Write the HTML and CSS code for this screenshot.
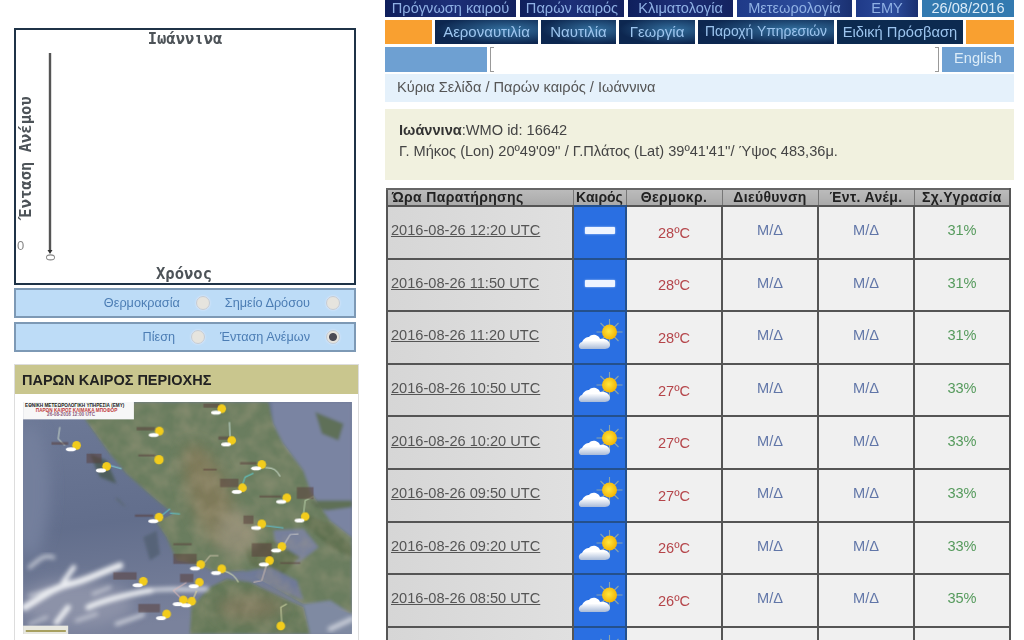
FILE: index.html
```html
<!DOCTYPE html>
<html lang="el">
<head>
  <meta charset="UTF-8">
  <meta name="viewport" content="width=device-width, initial-scale=1.0">
  <title>Παρών καιρός - Ιωάννινα</title>
  <link rel="stylesheet" href="styles.css">
</head>
<body>
  <svg class="defs" width="0" height="0">
    <defs>
      <radialGradient id="sunfill" cx="45%" cy="45%" r="60%">
        <stop offset="0" stop-color="#ffe640"/>
        <stop offset="1" stop-color="#f2b000"/>
      </radialGradient>
      <linearGradient id="cloudfill" x1="0" y1="0" x2="0" y2="1">
        <stop offset=".4" stop-color="#fff"/>
        <stop offset="1" stop-color="#a9bbd8"/>
      </linearGradient>
      <symbol id="sun-cloud" viewBox="0 0 50 40">
        <g stroke="#e6d878" stroke-width="1.1" opacity=".5">
          <path d="M34.500 2V28M21.500 15H47.500M25.500 6L43.500 24M43.500 6L25.500 24"/>
        </g>
        <circle cx="34.500" cy="15" r="7.500" fill="url(#sunfill)"/>
        <path fill="url(#cloudfill)" d="M6 32C3 31 3 26 7 25 9 21 12 20 14 20 17 16 24 18 25 22 30 21 35 24 35 28 35 31 32 32 29 32Z"/>
      </symbol>
      <symbol id="m-sc" viewBox="0 0 50 40">
        <circle cx="34" cy="20" r="13" fill="#f2cc1c"/>
        <ellipse cx="17" cy="32" rx="15" ry="6" fill="#fff"/>
      </symbol>
    </defs>
  </svg>

  <div class="page">
    <aside class="left">
      <div class="chart">
        <svg width="342" height="257" viewBox="0 0 342 257">
          <text class="chart-title" x="171" y="16" text-anchor="middle">Ιωάννινα</text>
          <text class="chart-title" transform="translate(17 129) rotate(-90)" text-anchor="middle">Ένταση Ανέμου</text>
          <path d="M36 25V222" stroke="#555" stroke-width="2.4"/>
          <path d="M33.500 222L36 226 38.500 222" fill="#333"/>
          <text class="chart-tick" x="3" y="222">0</text>
          <text class="chart-tick" transform="translate(41 233) rotate(-90)">0</text>
          <text class="chart-title" x="170" y="251" text-anchor="middle">Χρόνος</text>
        </svg>
      </div>

      <div class="options options-first">
        <label class="option">Θερμοκρασία <input type="radio" name="m"></label>
        <label class="option">Σημείο Δρόσου <input type="radio" name="m"></label>
      </div>
      <div class="options">
        <label class="option">Πίεση <input type="radio" name="m"></label>
        <label class="option">Ένταση Ανέμων <input type="radio" name="m" checked></label>
      </div>

      <section class="region">
        <h3>ΠΑΡΩΝ ΚΑΙΡΟΣ ΠΕΡΙΟΧΗΣ</h3>
        <svg class="map" width="329" height="232" viewBox="40 35 985 695">
          <defs>
            <filter id="soft" x="-5%" y="-5%" width="110%" height="110%"><feGaussianBlur stdDeviation="4"/></filter>
            <filter id="cloudy" x="-5%" y="-5%" width="110%" height="110%"><feGaussianBlur stdDeviation="7"/></filter>
            <filter id="softer" x="-20%" y="-20%" width="140%" height="140%"><feGaussianBlur stdDeviation="20"/></filter>
            <filter id="tiny"><feGaussianBlur stdDeviation="2"/></filter>
            <filter id="terrain" x="0" y="0" width="100%" height="100%">
              <feTurbulence type="fractalNoise" baseFrequency=".02" numOctaves="3" seed="7"/>
              <feColorMatrix values="0 0 0 0 .42  0 0 0 0 .36  0 0 0 0 .24  1.8 0 0 0 -.62"/>
              <feGaussianBlur stdDeviation="3"/>
            </filter>
            <linearGradient id="sea" x1="0" y1="0" x2=".2" y2="1">
              <stop offset="0" stop-color="#6e7a98"/>
              <stop offset=".55" stop-color="#626e8c"/>
              <stop offset="1" stop-color="#7a829c"/>
            </linearGradient>
            <clipPath id="land">
              <path d="M225 85L380 35H775L790 100 820 160 880 240 905 310 960 390 1025 440V670L930 640 880 640 790 590 700 540 620 545 560 520 500 510 470 440 440 395 490 370 430 320 350 250 300 190Z"/>
              <path d="M540 730L545 650 600 590 650 565 720 575 790 610 880 650 900 730Z"/>
            </clipPath>
          </defs>
          <rect x="40" y="35" width="985" height="695" fill="url(#sea)"/>
          <g filter="url(#soft)">
            <path fill="#6a7d5e" d="M225 85L380 35H775L790 100 820 160 880 240 905 310 960 390 1025 440V670L930 640 880 640 790 590 700 540 620 545 560 520 500 510 470 440 440 395 490 370 430 320 350 250 300 190Z"/>
            <path fill="#647858" d="M540 730L545 650 600 590 650 565 720 575 790 610 880 650 900 730Z"/>
            <path fill="#7a84a2" d="M785 35H1025V440L960 390 905 310 880 240 820 160 790 100Z"/>
            <path fill="#5f6f58" d="M915 65L1000 100 985 150 935 130Z"/>
            <path fill="#5f7056" d="M900 330L1025 330 1025 350 950 360 915 350Z"/>
            <path fill="#5d7050" d="M880 370L960 400 1025 470V500L960 470 880 400Z"/>
            <path fill="#77809c" d="M790 420L880 415 925 470 860 520 800 490Z"/>
            <path fill="#5e7050" d="M700 470L790 450 870 500 810 560 720 520Z"/>
            <path fill="#6f7a98" d="M690 545L780 530 860 570 880 630 790 590Z"/>
            <path fill="#7f8aa2" d="M880 640L960 630 1025 670V730H900Z"/>
            <path fill="#566478" d="M400 440L440 420 450 490 420 510Z"/>
            <path fill="#4e5d5c" d="M240 190L290 210 320 280 270 260Z"/>
            <path fill="#56646c" d="M320 320L350 350 340 345 318 325Z"/>
          </g>
          <g filter="url(#softer)">
            <ellipse cx="600" cy="320" rx="60" ry="170" fill="#7f7a5a" transform="rotate(-20 600 320)"/>
            <ellipse cx="680" cy="430" rx="60" ry="70" fill="#908d74"/>
            <ellipse cx="720" cy="650" rx="100" ry="40" fill="#7a785c"/>
            <ellipse cx="200" cy="640" rx="170" ry="70" fill="#8c92a8"/>
            <ellipse cx="60" cy="300" rx="60" ry="200" fill="#737f9c"/>
          </g>
          <rect x="225" y="35" width="800" height="695" filter="url(#terrain)" clip-path="url(#land)" opacity=".4"/>
          <g filter="url(#cloudy)" fill="none" stroke="#eceef2" stroke-linecap="round">
            <path stroke-width="20" d="M45 650C90 625 130 590 180 580S260 550 330 525"/>
            <path stroke-width="14" d="M160 575L192 530"/>
            <path stroke-width="17" d="M235 650C290 625 350 612 420 600"/>
            <path stroke-width="16" d="M140 695L175 650"/>
            <path stroke-width="13" opacity=".6" d="M60 530C90 505 100 492 130 500"/>
            <path stroke-width="13" opacity=".8" d="M420 600C470 590 520 600 590 595"/>
            <path stroke-width="12" opacity=".7" d="M320 700L400 672"/>
            <path stroke-width="15" opacity=".7" d="M960 715L1025 685"/>
            <path stroke-width="10" opacity=".55" d="M60 615L120 595M250 610L300 590M60 700L110 680M200 690L260 670"/>
          </g>
          <g filter="url(#tiny)" fill="none" stroke-width="3">
            <path stroke="#c8d6c8" d="M150 110L145 145 165 165"/>
            <path stroke="#7fd0d8" d="M300 225L335 235"/>
            <path stroke="#c8e0d8" d="M658 95L660 140"/>
            <path stroke="#cfe0cf" d="M765 232C790 230 800 240 810 258"/>
            <path stroke="#60c8c8" d="M695 290L705 260 730 248"/>
            <path stroke="#b8d0a8" d="M880 370L885 330 910 318"/>
            <path stroke="#60c8d0" d="M455 375L480 355M480 368L510 370"/>
            <path stroke="#60c0d0" d="M760 405L820 412"/>
            <path stroke="#c8c8c8" d="M820 465L840 432 865 430"/>
            <path stroke="#c8b8b0" d="M770 520L755 570 730 575"/>
            <path stroke="#c8c0a8" d="M580 520L600 495 625 495"/>
            <path stroke="#d0d8b0" d="M640 540C660 545 675 555 685 575"/>
            <path stroke="#c8d0a0" d="M815 700L812 650 830 640"/>
            <path stroke="#d8b8b8" d="M520 630L490 600 530 575"/>
            <path stroke="#e0d8a0" d="M545 635L560 600"/>
          </g>
          <g filter="url(#tiny)" fill="#5a3f3c" opacity=".55">
            <rect x="125" y="155" width="50" height="8"/><rect x="230" y="190" width="45" height="28"/>
            <rect x="380" y="110" width="55" height="10"/><rect x="385" y="192" width="50" height="6"/>
            <rect x="580" y="40" width="50" height="12"/><rect x="625" y="138" width="35" height="10"/>
            <rect x="690" y="215" width="50" height="7"/><rect x="630" y="265" width="55" height="25"/>
            <rect x="748" y="315" width="65" height="6"/><rect x="375" y="372" width="55" height="7"/>
            <rect x="700" y="375" width="30" height="25"/><rect x="725" y="458" width="60" height="40"/>
            <rect x="490" y="458" width="55" height="6"/><rect x="490" y="490" width="70" height="30"/>
            <rect x="310" y="545" width="70" height="22"/><rect x="385" y="640" width="65" height="25"/>
            <rect x="510" y="550" width="40" height="25"/><rect x="580" y="235" width="40" height="5"/>
            <rect x="810" y="515" width="60" height="5"/><rect x="860" y="290" width="50" height="35"/>
          </g>
          <g filter="url(#tiny)">
            <use href="#m-sc" x="166" y="145" width="50" height="40"/>
            <use href="#m-sc" x="256" y="208" width="50" height="40"/>
            <use href="#m-sc" x="414" y="102" width="50" height="40"/>
            <use href="#m-sc" x="601" y="35" width="50" height="40"/>
            <use href="#m-sc" x="631" y="130" width="50" height="40"/>
            <use href="#m-sc" x="721" y="202" width="50" height="40"/>
            <use href="#m-sc" x="663" y="272" width="50" height="40"/>
            <use href="#m-sc" x="796" y="302" width="50" height="40"/>
            <use href="#m-sc" x="851" y="358" width="50" height="40"/>
            <use href="#m-sc" x="721" y="380" width="50" height="40"/>
            <use href="#m-sc" x="413" y="360" width="50" height="40"/>
            <use href="#m-sc" x="781" y="448" width="50" height="40"/>
            <use href="#m-sc" x="744" y="490" width="50" height="40"/>
            <use href="#m-sc" x="538" y="502" width="50" height="40"/>
            <use href="#m-sc" x="601" y="515" width="50" height="40"/>
            <use href="#m-sc" x="534" y="555" width="50" height="40"/>
            <use href="#m-sc" x="366" y="552" width="50" height="40"/>
            <use href="#m-sc" x="486" y="608" width="50" height="40"/>
            <use href="#m-sc" x="511" y="612" width="50" height="40"/>
            <use href="#m-sc" x="436" y="650" width="50" height="40"/>
            <circle cx="447" cy="208" r="14" fill="#f2cc1c"/>
            <circle cx="812" cy="706" r="13" fill="#f2cc1c"/>
          </g>
          <rect x="40" y="35" width="332" height="52" fill="#f7f7f7"/>
          <text class="map-note" x="46" y="50" fill="#222">ΕΘΝΙΚΗ ΜΕΤΕΩΡΟΛΟΓΙΚΗ ΥΠΗΡΕΣΙΑ (ΕΜΥ)</text>
          <text class="map-note" x="78" y="64" fill="#c03a3a">ΠΑΡΩΝ ΚΑΙΡΟΣ ΚΛΙΜΑΚΑ ΜΠΟΦΟΡ</text>
          <text class="map-note" x="112" y="78" fill="#8a5a7a">26-08-2016 12:00 UTC</text>
          <rect x="40" y="705" width="135" height="25" fill="#e8e8e0"/>
          <rect x="48" y="718" width="120" height="6" fill="#a8a060"/>
        </svg>
      </section>
    </aside>

    <main class="right">
      <nav class="nav nav-top">
        <a>Πρόγνωση καιρού</a>
        <a>Παρών καιρός</a>
        <a>Κλιματολογία</a>
        <a class="light">Μετεωρολογία</a>
        <a class="light">ΕΜΥ</a>
        <span class="date">26/08/2016</span>
      </nav>
      <nav class="nav nav-sub">
        <span class="filler"></span>
        <a>Αεροναυτιλία</a>
        <a>Ναυτιλία</a>
        <a>Γεωργία</a>
        <a class="small">Παροχή Υπηρεσιών</a>
        <a class="flat">Ειδική Πρόσβαση</a>
        <span class="filler"></span>
      </nav>
      <div class="nav nav-search">
        <span class="search-side"></span>
        <div class="search">
          <span class="bracket"></span>
          <input type="text" aria-label="search">
          <span class="bracket closing"></span>
        </div>
        <a class="lang">English</a>
      </div>

      <div class="crumbs">Κύρια Σελίδα / Παρών καιρός / Ιωάννινα</div>

      <div class="station">
        <b>Ιωάννινα</b>:WMO id: 16642<br>
        Γ. Μήκος (Lon) 20º49'09'' / Γ.Πλάτος (Lat) 39º41'41''/ Ύψος 483,36μ.
      </div>

      <table class="obs">
        <thead>
          <tr>
            <th class="c-time">Ώρα Παρατήρησης</th>
            <th class="c-icon">Καιρός</th>
            <th>Θερμοκρ.</th>
            <th>Διεύθυνση</th>
            <th>Έντ. Ανέμ.</th>
            <th>Σχ.Υγρασία</th>
          </tr>
        </thead>
        <tbody>
          <tr><td class="c-time"><a>2016-08-26 12:20 UTC</a></td><td class="c-icon"><span class="clear-bar"></span></td><td class="temp">28ºC</td><td class="na">Μ/Δ</td><td class="na">Μ/Δ</td><td class="hum">31%</td></tr>
          <tr><td class="c-time"><a>2016-08-26 11:50 UTC</a></td><td class="c-icon"><span class="clear-bar"></span></td><td class="temp">28ºC</td><td class="na">Μ/Δ</td><td class="na">Μ/Δ</td><td class="hum">31%</td></tr>
          <tr><td class="c-time"><a>2016-08-26 11:20 UTC</a></td><td class="c-icon"><svg class="wx" width="50" height="40"><use href="#sun-cloud"/></svg></td><td class="temp">28ºC</td><td class="na">Μ/Δ</td><td class="na">Μ/Δ</td><td class="hum">31%</td></tr>
          <tr><td class="c-time"><a>2016-08-26 10:50 UTC</a></td><td class="c-icon"><svg class="wx" width="50" height="40"><use href="#sun-cloud"/></svg></td><td class="temp">27ºC</td><td class="na">Μ/Δ</td><td class="na">Μ/Δ</td><td class="hum">33%</td></tr>
          <tr><td class="c-time"><a>2016-08-26 10:20 UTC</a></td><td class="c-icon"><svg class="wx" width="50" height="40"><use href="#sun-cloud"/></svg></td><td class="temp">27ºC</td><td class="na">Μ/Δ</td><td class="na">Μ/Δ</td><td class="hum">33%</td></tr>
          <tr><td class="c-time"><a>2016-08-26 09:50 UTC</a></td><td class="c-icon"><svg class="wx" width="50" height="40"><use href="#sun-cloud"/></svg></td><td class="temp">27ºC</td><td class="na">Μ/Δ</td><td class="na">Μ/Δ</td><td class="hum">33%</td></tr>
          <tr><td class="c-time"><a>2016-08-26 09:20 UTC</a></td><td class="c-icon"><svg class="wx" width="50" height="40"><use href="#sun-cloud"/></svg></td><td class="temp">26ºC</td><td class="na">Μ/Δ</td><td class="na">Μ/Δ</td><td class="hum">33%</td></tr>
          <tr><td class="c-time"><a>2016-08-26 08:50 UTC</a></td><td class="c-icon"><svg class="wx" width="50" height="40"><use href="#sun-cloud"/></svg></td><td class="temp">26ºC</td><td class="na">Μ/Δ</td><td class="na">Μ/Δ</td><td class="hum">35%</td></tr>
          <tr class="last"><td class="c-time"></td><td class="c-icon"><svg class="wx" width="50" height="40"><use href="#sun-cloud"/></svg></td><td></td><td></td><td></td><td></td></tr>
        </tbody>
      </table>
    </main>
  </div>
</body>
</html>
```

FILE: styles.css
```css
html, body { margin: 0; height: 640px; overflow: hidden; background: #fff; }
body { font-family: "Liberation Sans", Arial, sans-serif; font-size: 14.6px; color: #555; }
.defs { display: block; height: 0; }
.page { display: flex; align-items: flex-start; padding-left: 14px; height: 640px; overflow: hidden; filter: blur(.4px); }

/* left column */
.left { width: 345px; margin-right: 26px; padding-top: 28px; flex: none; }
.chart { width: 338px; height: 253px; border: 2px solid #1f3347; background: #fff; overflow: hidden; }
.chart svg { display: block; margin: -2px; }
.chart-title { font-family: "DejaVu Sans Mono", monospace; font-weight: bold; font-size: 15.5px; fill: #4d5358; }
.chart-tick { font-size: 13px; fill: #888; }

.options { box-sizing: border-box; width: 342px; height: 30px; margin-top: 4px; display: flex; justify-content: flex-end; align-items: center; gap: 15px; padding-right: 14px; background: #bddcf7; border: 2px solid #7d99b5; color: #4c7db4; font-size: 12.7px; }
.options-first { margin-top: 3px; }
.option { display: flex; align-items: center; gap: 16px; }
.option input { appearance: none; width: 14px; height: 14px; margin: 0; border-radius: 50%; background: #e6e4de; border: 1px solid #c4ccd4; box-shadow: 0 0 2px #eef; }
.option input:checked { background: radial-gradient(circle, #4a4a55 0 3.5px, #e6e4de 4.5px); }

.region { margin-top: 12px; border: 1px solid #ddd; background: #fff; height: 400px; }
.region h3 { margin: 0; height: 29px; line-height: 30px; padding-left: 7px; background: #c9c68e; color: #222; font-size: 14.5px; font-weight: bold; }
.map { display: block; margin: 8px 0 0 8px; }
.map-note { font-size: 14px; font-weight: bold; }

/* right column */
.right { width: 629px; flex: none; }
.nav { display: grid; }
.nav a, .nav .date { display: flex; align-items: center; justify-content: center; overflow: hidden; white-space: nowrap; }
.nav-top { grid-template-columns: 131px 104px 105px 115px 62px 92px; gap: 4px; height: 17px; }
.nav-top a { padding-bottom: 1px; background: linear-gradient(90deg, #0f1f5c, #1d2f78 50%, #14225f); color: #8fb0e4; font-size: 14.6px; }
.nav-top a.light { background: linear-gradient(90deg, #1f3a88, #2c4c9c 60%, #1a3070); }
.nav-top .date { padding-bottom: 1px; background: #337ab0; color: #dcecf8; font-size: 14.6px; }
.nav-sub { grid-template-columns: 47px 103px 75px 76px 136px 126px 48px; gap: 3px; height: 24px; margin-top: 3px; }
.nav-sub a { padding-bottom: 1px; background: radial-gradient(ellipse at 70% 40%, #336f9e, transparent 70%), #0d2750; color: #9cc4ee; font-size: 15px; }
.nav-sub a.small { font-size: 13.9px; padding-bottom: 3px; }
.nav-sub a.flat { background: #0c2a50; font-size: 14.7px; }
.filler { background: #f9a030; }
.nav-search { grid-template-columns: 102px 449px 72px; gap: 3px; height: 25px; margin-top: 3px; }
.search-side { background: #6ea0d2; }
.search { display: flex; }
.search input { flex: 1; min-width: 0; border: 0; padding: 0; background: #fff; outline: 0; }
.bracket { width: 3px; border: solid #999; border-width: 1px 0 1px 1px; }
.bracket.closing { border-width: 1px 1px 1px 0; }
.nav-search .lang { padding-bottom: 3px; background: #6ea0d2; color: #dcecf8; font-size: 14.6px; }
.crumbs { height: 28px; line-height: 27px; margin-top: 2px; padding-left: 12px; background: #e5f1fb; }
.station { box-sizing: border-box; height: 71px; margin-top: 7px; padding: 11px 14px 0; background: #f1f1df; color: #444; line-height: 21px; }
.station b { color: #333; }

.obs { width: 625px; margin: 8px 0 0 1px; table-layout: fixed; border-collapse: collapse; border: 2px solid #555; border-top-color: #666; }
.obs th { box-sizing: border-box; height: 17px; padding: 0 0 1px; line-height: 14px; background: linear-gradient(#bbb, #aaa); color: #222; font-size: 14px; letter-spacing: .35px; border: 1px solid #777; border-top: 0; }
.obs th.c-time { width: 186px; text-align: left; padding-left: 4px; }
.obs th.c-icon { width: 53px; letter-spacing: 0; }
.obs td { box-sizing: border-box; height: 52.6px; padding: 0 0 4px; text-align: center; background: #f0f0f0; border: 2px solid #555; }
.obs td.c-time { text-align: left; padding-left: 3px; background: linear-gradient(90deg, #d6d6d6, #e0e0e0); border-left: 0; }
.obs td.c-time a { color: #555; text-decoration: underline; }
.obs td.c-icon { background: #2a6fe2; border-color: #24508c; padding: 0; }
.obs td.temp { padding: 1px 0 0; color: #b5454a; }
.clear-bar { display: block; width: 30px; height: 7px; margin: 0 auto 3px; background: #eef4ff; border-radius: 1px; box-shadow: 0 0 2px #cfe0ff; }
.wx { display: block; margin: 0 auto; }
.na { color: #6176a8; }
.hum { color: #559a5c; }
```
